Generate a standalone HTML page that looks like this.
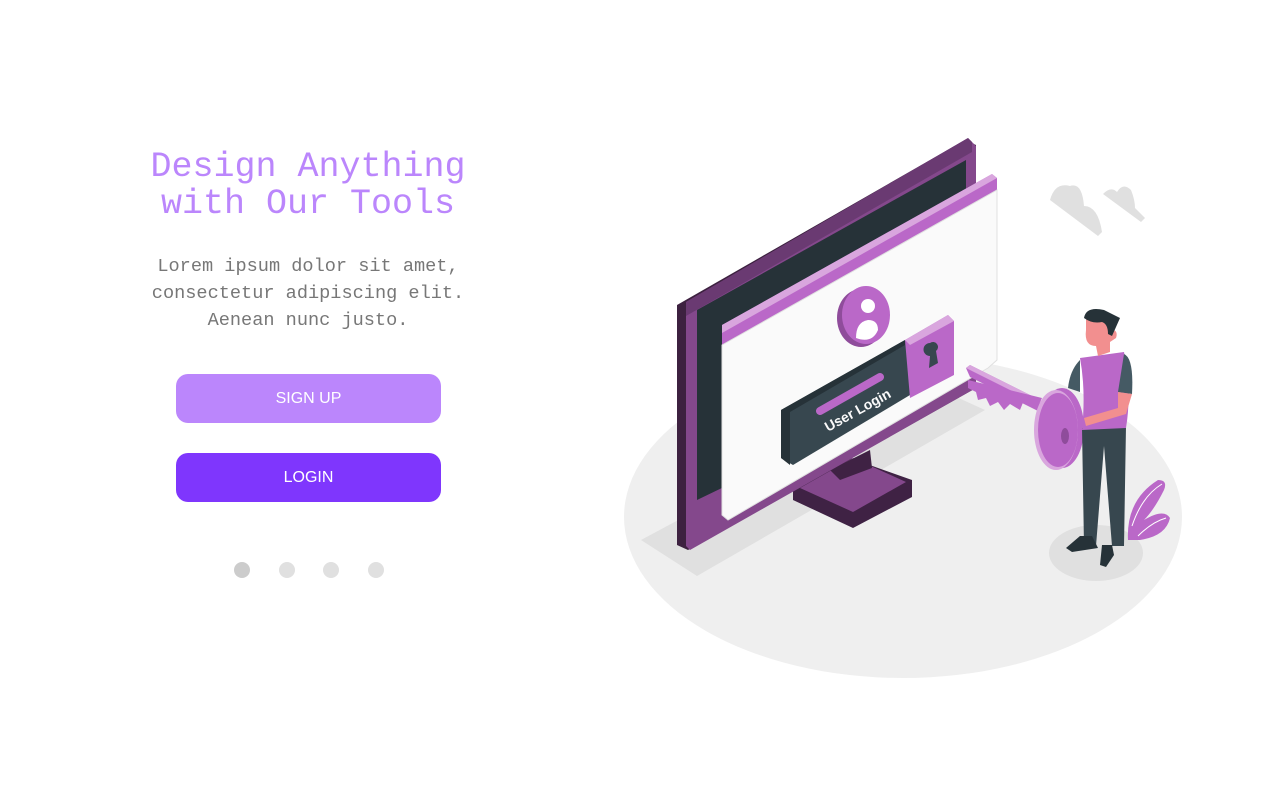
<!DOCTYPE html>
<html><head><meta charset="utf-8"><style>
html,body{margin:0;padding:0;background:#fff;width:1280px;height:800px;overflow:hidden}
.t{position:absolute;left:108px;width:400px;text-align:center;font-family:"Liberation Mono",monospace}
h1{margin:0;position:absolute;left:108px;top:149px;width:400px;text-align:center;font-family:"Liberation Mono",monospace;font-weight:normal;font-size:35px;line-height:37px;color:#bb86fc}
.p{top:253px;font-size:18.6px;line-height:27px;color:#777}
.b{position:absolute;left:176px;width:265px;height:49px;border-radius:12px;color:#fff;font-family:"Liberation Sans",sans-serif;font-size:16px;line-height:49px;text-align:center}
.d{position:absolute;top:562px;width:16px;height:16px;border-radius:50%;background:#e0e0e0}
</style></head><body>
<h1>Design Anything<br>with Our Tools</h1>
<div class="t p">Lorem ipsum dolor sit amet,<br>consectetur adipiscing elit.<br>Aenean nunc justo.</div>
<div class="b" style="top:374px;background:#bb86fc">SIGN UP</div>
<div class="b" style="top:453px;background:#7f36fd">LOGIN</div>
<div class="d" style="left:234px;background:#cccccc"></div>
<div class="d" style="left:279px"></div>
<div class="d" style="left:323px"></div>
<div class="d" style="left:368px"></div>
<svg style="position:absolute;left:0;top:0" width="1280" height="800" viewBox="0 0 1280 800">
<ellipse cx="903" cy="517" rx="279" ry="161" fill="#efefef"/>
<polygon points="641,540 930,385 985,410 697,576" fill="#e0e0e0"/>
<ellipse cx="1096" cy="553" rx="47" ry="28" fill="#e0e0e0"/>
<path d="M1050,200 q5,-18 20,-14 q12,-4 14,20 q14,0 18,26 l-4,4 z" fill="#e0e0e0"/>
<path d="M1103,194 q8,-8 14,-2 q6,-10 14,-2 q4,10 4,18 l10,10 l-4,4 z" fill="#e0e0e0"/>
<polygon points="793,490 850,458 912,480 912,497 853,528 793,500" fill="#3f2244"/>
<polygon points="800,488 853,458 906,482 853,512" fill="#84488c"/>
<polygon points="830,470 870,450 872,468 840,480" fill="#3f2244"/>
<polygon points="677,305 965,140 976,145 976,388 688,550 677,545" fill="#3d2140"/>
<polygon points="686,302 968,138 976,146 976,388 690,550 686,546" fill="#84488c"/>
<polygon points="686,302 968,138 972,142 972,152 686,316" fill="#6a3a72"/>
<polygon points="697,310 966,160 966,370 697,500" fill="#263238"/>
<polygon points="722,325 992,174 997,178 997,192 722,347" fill="#ba68c8"/>
<polygon points="722,325 992,174 997,178 722,333" fill="#d9a6de"/>
<polygon points="722,345 997,190 997,360 988,368 728,520 722,515" fill="#fafafa" stroke="#e0e0e0"/>
<ellipse cx="861" cy="318" rx="24" ry="29" fill="#8f4c9b"/>
<ellipse cx="866" cy="315" rx="24" ry="29" fill="#ba68c8"/>
<circle cx="868" cy="306" r="7" fill="#fff"/>
<path d="M856,338 q0,-16 12,-18 q10,0 10,10 q-6,14 -22,8z" fill="#fff"/>
<polygon points="781,410 905,340 910,345 910,395 793,465 781,458" fill="#37474f"/>
<polygon points="781,410 905,340 905,345 790,412 790,465 781,458" fill="#263238"/>
<polygon points="905,340 948,315 954,321 954,375 910,398" fill="#ba68c8"/>
<polygon points="905,340 948,315 954,321 910,345" fill="#d9a6de"/>
<path d="M930,343 a5,5 0 1 1 6,8 l2,12 l-9,5 l1,-12 a5,5 0 0 1 0,-13z" fill="#37474f"/>
<line x1="820" y1="411" x2="880" y2="377" stroke="#ba68c8" stroke-width="8" stroke-linecap="round"/>
<text x="828" y="432" transform="rotate(-29 828 432)" font-family="Liberation Sans,sans-serif" font-weight="bold" font-size="14" fill="#fafafa">User Login</text>
<!-- key -->
<path d="M966,368 l4,-3 l72,36 l0,12 l-72,-36 z" fill="#ba68c8"/>
<polygon points="966,368 970,365 1042,401 1038,404" fill="#d9a6de"/>
<path d="M968,380 l0,8 l8,4 l2,8 l8,-2 l4,8 l8,-4 l6,8 l6,-6 l10,6 l4,-10 l14,6 l4,-8 z" fill="#ba68c8"/>
<ellipse cx="1062" cy="428" rx="22" ry="40" fill="#ba68c8"/>
<ellipse cx="1056" cy="430" rx="22" ry="40" fill="#d9a6de"/>
<ellipse cx="1058" cy="430" rx="20" ry="37" fill="#ba68c8"/>
<ellipse cx="1065" cy="436" rx="4" ry="8" fill="#8f4c9b"/>
<path d="M1128,540 q-2,-40 30,-60 q10,0 6,10 q-10,20 -20,30 q20,-12 26,-2 q-4,18 -30,22 z" fill="#ba68c8"/>
<path d="M1132,526 q10,-30 30,-42 M1138,536 q14,-14 28,-18" stroke="#fff" stroke-width="1" fill="none"/>
<path d="M1082,428 l44,-2 l-2,120 l-12,0 l-8,-100 l-8,100 l-12,0 z" fill="#37474f"/>
<path d="M1102,545 l10,0 l2,10 l-8,12 l-6,-2 z" fill="#263238"/>
<path d="M1080,536 l12,0 l6,12 l-26,4 l-6,-4 z" fill="#263238"/>
<path d="M1080,358 l44,-6 q8,40 2,76 l-44,2 q4,-40 -2,-72z" fill="#ba68c8"/>
<path d="M1080,360 q-10,10 -12,28 l12,4 z" fill="#455a64"/>
<path d="M1124,354 q10,4 8,40 l-14,-2 z" fill="#455a64"/>
<path d="M1118,392 l14,2 l-6,20 l-40,12 l-2,-8 l34,-10z" fill="#f28f8f"/>
<path d="M1086,320 q2,-10 18,-8 q12,2 10,18 q4,2 2,8 l-6,4 l0,10 l-12,4 l-2,-10 q-12,0 -10,-16z" fill="#f28f8f"/>
<path d="M1084,318 q2,-12 20,-8 l16,8 l-8,18 l-4,-2 q0,-10 -6,-12 q-10,2 -18,-4z" fill="#263238"/>
</svg>
</body></html>
